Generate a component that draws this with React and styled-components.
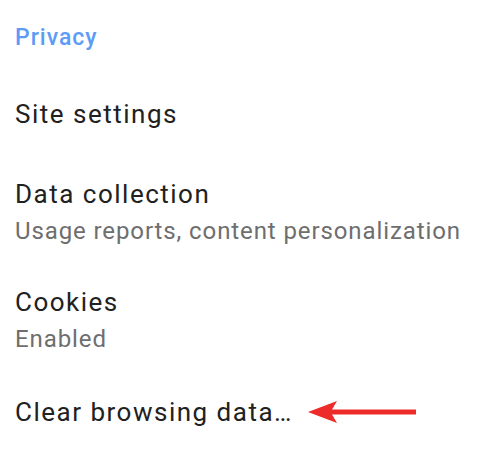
import React from 'react';
import styled, { createGlobalStyle } from 'styled-components';

const GlobalStyle = createGlobalStyle`
  body {
    margin: 0;
    background: #ffffff;
    font-family: Roboto, "Noto Sans", sans-serif;
  }
`;

const Screen = styled.div`
  width: 493px;
  height: 463px;
  background: #ffffff;
  display: flex;
  flex-direction: column;
  padding: 22px 15px 0 15px;
  box-sizing: border-box;
  overflow: hidden;
`;

const SectionHeader = styled.div`
  color: #5e9bf6;
  font-size: 23px;
  font-weight: 500;
  line-height: 32px;
  letter-spacing: 1px;
  margin-bottom: 42px;
`;

const Item = styled.div`
  display: flex;
  align-items: center;
  gap: 15px;
  margin-bottom: ${props => props.gap || 40}px;
`;

const Texts = styled.div`
  display: flex;
  flex-direction: column;
`;

const Title = styled.div`
  color: #212121;
  font-size: 26px;
  line-height: 36px;
  letter-spacing: 1.5px;
  white-space: nowrap;
`;

const Summary = styled.div`
  color: #6e6e6e;
  font-size: 24px;
  line-height: 38px;
  letter-spacing: 0.9px;
  white-space: nowrap;
`;

const Arrow = () => (
  <svg width="110" height="24" viewBox="0 0 110 24">
    <path d="M0 12 L29 1 L24 9.5 L108 9.5 L108 14.5 L24 14.5 L29 23 Z" fill="#ee2b2b" />
  </svg>
);

export default function App() {
  return (
    <>
      <GlobalStyle />
      <Screen>
        <SectionHeader>Privacy</SectionHeader>
        <Item gap={44}>
          <Texts>
            <Title>Site settings</Title>
          </Texts>
        </Item>
        <Item gap={34}>
          <Texts>
            <Title>Data collection</Title>
            <Summary>Usage reports, content personalization</Summary>
          </Texts>
        </Item>
        <Item gap={36}>
          <Texts>
            <Title>Cookies</Title>
            <Summary>Enabled</Summary>
          </Texts>
        </Item>
        <Item>
          <Texts>
            <Title>Clear browsing data…</Title>
          </Texts>
          <Arrow />
        </Item>
      </Screen>
    </>
  );
}
